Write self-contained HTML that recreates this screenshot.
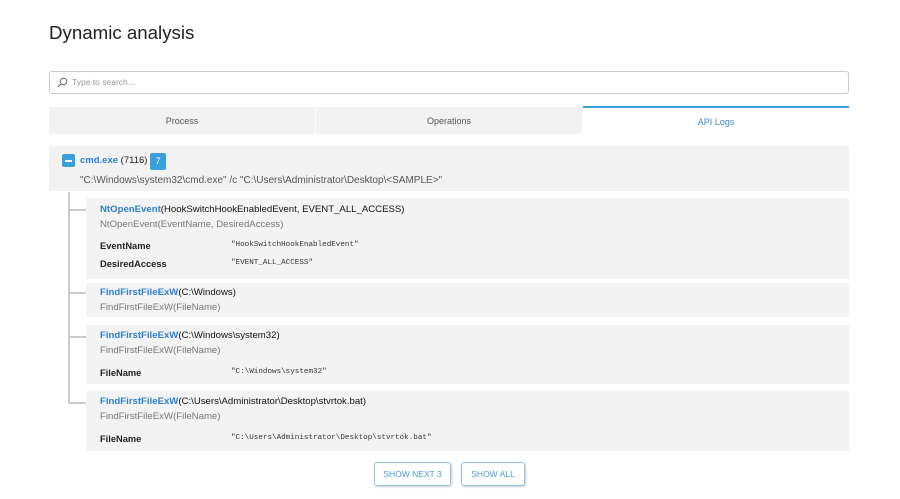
<!DOCTYPE html>
<html><head><style>
body{margin:0;width:900px;height:499px;background:#fff;font-family:"Liberation Sans",sans-serif;color:#222;position:relative;overflow:hidden}
.a{position:absolute}
h1{position:absolute;left:49px;top:22px;margin:0;font-weight:normal;font-size:18.7px;color:#222}
.search{left:49px;top:71px;width:798px;height:21px;border:1px solid #ccc;border-radius:3px}
.search span{position:absolute;left:22px;top:5px;font-size:8.5px;color:#999}
.tab{top:107px;height:27px;background:#f2f2f2;font-size:9px;color:#555;text-align:center;line-height:28px}
.card{left:86px;width:763px;background:#f3f3f4;font-size:9.6px}
.blue{color:#2a7fd0;font-weight:bold}
.t1{position:absolute;left:14px;color:#111}
.t2{position:absolute;left:14px;color:#777;font-size:9.6px}
.k{position:absolute;left:14px;font-weight:bold;font-size:9.3px}
.v{position:absolute;left:145px;font-family:"Liberation Mono",monospace;font-size:7.6px;color:#333}
.btn{top:462px;height:22px;border:1px solid #8fc3e8;border-radius:3px;font-size:8.5px;color:#4a9ad8;text-align:center;line-height:22px;box-shadow:1px 1px 2px #ccc}
.line{background:#ccc}
</style></head><body>
<h1>Dynamic analysis</h1>
<div class="a search"><svg class="a" style="left:7px;top:5px" width="11" height="11"><circle cx="6.5" cy="4.5" r="3.3" fill="none" stroke="#666" stroke-width="1"/><line x1="4" y1="7" x2="1" y2="10" stroke="#666"/></svg><span>Type to search...</span></div>
<div class="a tab" style="left:49px;width:266px">Process</div>
<div class="a tab" style="left:316px;width:266px">Operations</div>
<div class="a tab" style="left:583px;width:266px;background:#fff;border-top:2px solid #3aa0dc;top:106px;color:#3a8ad0">API Logs</div>
<div class="a" style="left:49px;top:146px;width:800px;height:45px;background:#f2f2f2;font-size:9.5px">
 <div class="a" style="left:13px;top:8px;width:13px;height:13px;background:#3aa0dc;border-radius:2px"><div class="a" style="left:3px;top:6px;width:7px;height:1.5px;background:#fff"></div></div>
 <div class="a" style="left:31px;top:9px;white-space:nowrap"><b class="blue">cmd.exe</b> <span>(7116)</span></div>
 <div class="a" style="left:101px;top:7px;width:16px;height:17px;background:#3aa0dc;border-radius:2px;color:#fff;font-size:9px;text-align:center;line-height:17px">7</div>
 <div class="a" style="left:31px;top:29px;color:#555;font-size:10px">"C:\Windows\system32\cmd.exe" /c "C:\Users\Administrator\Desktop\&lt;SAMPLE&gt;"</div>
</div>
<div class="a line" style="left:68px;top:192px;width:2px;height:212px"></div>
<div class="a line" style="left:68px;top:209px;width:18px;height:2px"></div>
<div class="a line" style="left:68px;top:292px;width:18px;height:2px"></div>
<div class="a line" style="left:68px;top:336px;width:18px;height:2px"></div>
<div class="a line" style="left:68px;top:402px;width:18px;height:2px"></div>
<div class="a card" style="top:198px;height:81px">
 <div class="t1" style="top:6px"><span class="blue">NtOpenEvent</span>(HookSwitchHookEnabledEvent, EVENT_ALL_ACCESS)</div>
 <div class="t2" style="top:21px">NtOpenEvent(EventName, DesiredAccess)</div>
 <div class="k" style="top:43px">EventName</div><div class="v" style="top:43px">"HookSwitchHookEnabledEvent"</div>
 <div class="k" style="top:61px">DesiredAccess</div><div class="v" style="top:61px">"EVENT_ALL_ACCESS"</div>
</div>
<div class="a card" style="top:283px;height:34px">
 <div class="t1" style="top:4px"><span class="blue">FindFirstFileExW</span>(C:\Windows)</div>
 <div class="t2" style="top:19px">FindFirstFileExW(FileName)</div>
</div>
<div class="a card" style="top:325px;height:59px">
 <div class="t1" style="top:5px"><span class="blue">FindFirstFileExW</span>(C:\Windows\system32)</div>
 <div class="t2" style="top:20px">FindFirstFileExW(FileName)</div>
 <div class="k" style="top:43px">FileName</div><div class="v" style="top:43px">"C:\Windows\system32"</div>
</div>
<div class="a card" style="top:391px;height:60px">
 <div class="t1" style="top:5px"><span class="blue">FindFirstFileExW</span>(C:\Users\Administrator\Desktop\stvrtok.bat)</div>
 <div class="t2" style="top:20px">FindFirstFileExW(FileName)</div>
 <div class="k" style="top:43px">FileName</div><div class="v" style="top:43px">"C:\Users\Administrator\Desktop\stvrtok.bat"</div>
</div>
<div class="a btn" style="left:374px;width:75px">SHOW NEXT 3</div>
<div class="a btn" style="left:461px;width:62px">SHOW ALL</div>
</body></html>
